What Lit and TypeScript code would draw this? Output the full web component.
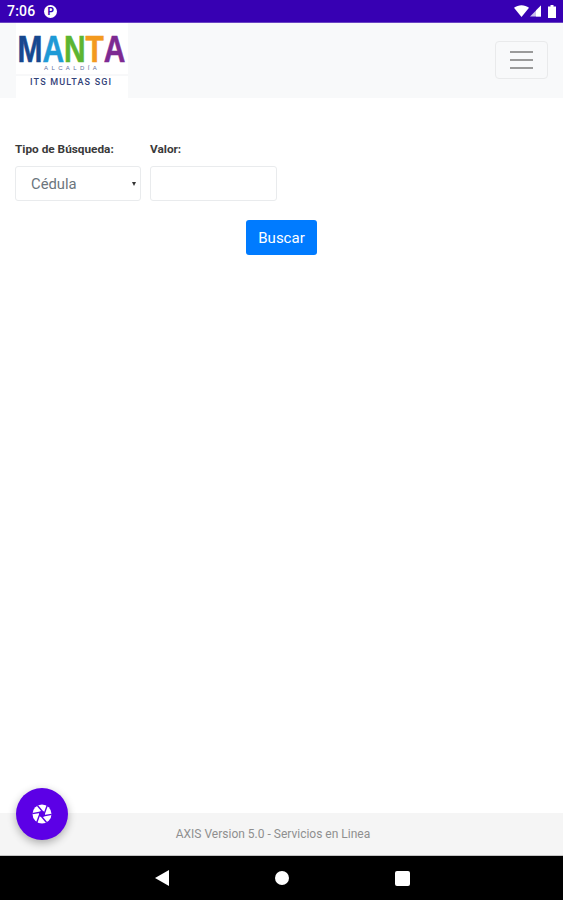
import { LitElement, html, css } from "lit";
import { customElement } from "lit/decorators.js";

@customElement("app-root")
export class AppRoot extends LitElement {
  static styles = css`
    :host { display: flex; flex-direction: column; height: 900px; position: relative; background: #fff; font-family: Roboto, "Liberation Sans", sans-serif; overflow: hidden; }
    .status { background: #3700b3; display: flex; align-items: center; justify-content: space-between; padding: 0 6px 0 7px; color: #fff; flex: none; box-sizing: border-box; border-bottom: 1px solid #6a45c4; height: 23px; }
    .status-left { display: flex; align-items: center; gap: 9px; font-size: 14px; font-weight: 500; letter-spacing: 0.2px; }
    .status-right { display: flex; align-items: center; gap: 1px; }
    .battery { margin-left: 5px; }
    .p-badge { width: 13px; height: 13px; border-radius: 50%; background: #fff; color: #3700b3; font-size: 10px; font-weight: 700; display: flex; align-items: center; justify-content: center; }
    .topbar { height: 75px; flex: none; background: #f8f9fa; display: flex; align-items: flex-start; justify-content: space-between; padding: 0 15px 0 16px; box-sizing: border-box; }
    .logo { width: 112px; height: 75px; background: #fff; display: block; }
    .manta { font-family: "Liberation Sans", sans-serif; font-weight: 700; font-size: 37px; stroke-width: 0.6px; }
    .m { fill: #17488f; stroke: #17488f; } .a1 { fill: #1e9ad6; stroke: #1e9ad6; } .n { fill: #5cb531; stroke: #5cb531; } .t { fill: #f39a1e; stroke: #f39a1e; } .a2 { fill: #7d2a92; stroke: #7d2a92; }
    .alc { font-family: "Liberation Sans", sans-serif; font-size: 6px; letter-spacing: 3.4px; fill: #5f6f9e; }
    .its { font-family: Roboto, sans-serif; font-size: 9px; font-weight: 500; letter-spacing: 1.17px; fill: #33437a; }
    .rule { stroke: #f0f1f3; stroke-width: 1; }
    .toggler { margin-top: 18px; width: 53px; height: 38px; box-sizing: border-box; border: 1px solid #e9eaeb; border-radius: 4px; display: flex; flex-direction: column; align-items: center; justify-content: center; gap: 5.5px; }
    .toggler span { display: block; width: 23px; height: 2.5px; background: #9a9a9a; }
    main { flex: 1; padding: 44px 15px 0; box-sizing: border-box; }
    .fields { display: flex; gap: 9px; }
    .field { display: flex; flex-direction: column; gap: 10px; }
    label { font-size: 11.8px; line-height: 14px; font-weight: 700; color: #3a3a3a; height: 14px; }
    .control { height: 35px; box-sizing: border-box; border: 1px solid #e9ebed; border-radius: 3px; background: #fff; font-size: 14.8px; color: #6c757d; display: flex; align-items: center; justify-content: space-between; }
    .select { width: 126px; padding: 0 4px 0 15px; }
    .caret { width: 0; height: 0; border-left: 2.5px solid transparent; border-right: 2.5px solid transparent; border-top: 4px solid #333; }
    .input { width: 127px; }
    .action { display: flex; justify-content: center; margin-top: 19px; }
    button { width: 71px; height: 35px; border: none; border-radius: 3px; background: #007bff; color: #fff; font: 15px Roboto, "Liberation Sans", sans-serif; padding: 0; }
    footer { height: 43px; flex: none; background: #f5f5f5; display: flex; align-items: center; justify-content: center; font-size: 12px; color: #8f8f8f; padding-right: 17px; box-sizing: border-box; border-bottom: 1px solid #c4c4c4; }
    .nav { height: 44px; flex: none; background: #000; display: flex; align-items: center; justify-content: center; gap: 106px; padding-left: 1px; }
    .fab { position: absolute; left: 16px; top: 788px; width: 52px; height: 52px; border-radius: 50%; background: #5c00e6; box-shadow: 0 3px 8px rgba(0,0,0,.3); display: flex; align-items: center; justify-content: center; }
  `;

  render() {
    return html`
      <div class="status">
        <div class="status-left"><span>7:06</span><span class="p-badge">P</span></div>
        <div class="status-right">
          <svg width="15" height="12" viewBox="0 0 14 11"><path d="M0 2.5C4-.8 10-.8 14 2.5L7 11Z" fill="#fff"/></svg>
          <svg width="11" height="12" viewBox="0 0 11 11"><path d="M11 0V11H0Z" fill="#c9bdea"/><path d="M11 0V11H6V5Z" fill="#fff"/></svg>
          <svg class="battery" width="10" height="13" viewBox="0 0 9 13"><path d="M3 0H6V1.5H8.5V13H.5V1.5H3Z" fill="#fff"/></svg>
        </div>
      </div>
      <div class="topbar">
        <svg class="logo" width="112" height="75" viewBox="0 0 112 75">
          <text class="manta" transform="translate(1.5 39) scale(0.808 1)"><tspan class="m">M</tspan><tspan class="a1">A</tspan><tspan class="n">N</tspan><tspan class="t">T</tspan><tspan class="a2">A</tspan></text>
          <text class="alc" x="28" y="47">ALCALDÍA</text>
          <line class="rule" x1="0" y1="52" x2="112" y2="52"></line>
          <text class="its" x="14" y="62">ITS MULTAS SGI</text>
        </svg>
        <div class="toggler"><span></span><span></span><span></span></div>
      </div>
      <main>
        <div class="fields">
          <div class="field">
            <label>Tipo de Búsqueda:</label>
            <div class="control select"><span>Cédula</span><i class="caret"></i></div>
          </div>
          <div class="field">
            <label>Valor:</label>
            <div class="control input"></div>
          </div>
        </div>
        <div class="action"><button>Buscar</button></div>
      </main>
      <footer>AXIS Version 5.0 - Servicios en Linea</footer>
      <div class="nav">
        <svg width="14" height="16" viewBox="0 0 14 16"><path d="M14 0V16L0 8Z" fill="#fff"/></svg>
        <svg width="14" height="14" viewBox="0 0 14 14"><circle cx="7" cy="7" r="7" fill="#fff"/></svg>
        <svg width="15" height="15" viewBox="0 0 15 15"><rect width="15" height="15" rx="2" fill="#fff"/></svg>
      </div>
      <div class="fab">
        <svg width="20" height="20" viewBox="0 0 20 20">
          <circle cx="10" cy="10" r="9.5" fill="#fff"/>
          <g stroke="#5c00e6" stroke-width="1.4">
            <path d="M10 10 L10 .5" transform="rotate(20 10 10) translate(2 0)"/>
            <path d="M10 10 L10 .5" transform="rotate(80 10 10) translate(2 0)"/>
            <path d="M10 10 L10 .5" transform="rotate(140 10 10) translate(2 0)"/>
            <path d="M10 10 L10 .5" transform="rotate(200 10 10) translate(2 0)"/>
            <path d="M10 10 L10 .5" transform="rotate(260 10 10) translate(2 0)"/>
            <path d="M10 10 L10 .5" transform="rotate(320 10 10) translate(2 0)"/>
          </g>
          <circle cx="10" cy="10" r="3" fill="#5c00e6"/>
        </svg>
      </div>
    `;
  }
}
